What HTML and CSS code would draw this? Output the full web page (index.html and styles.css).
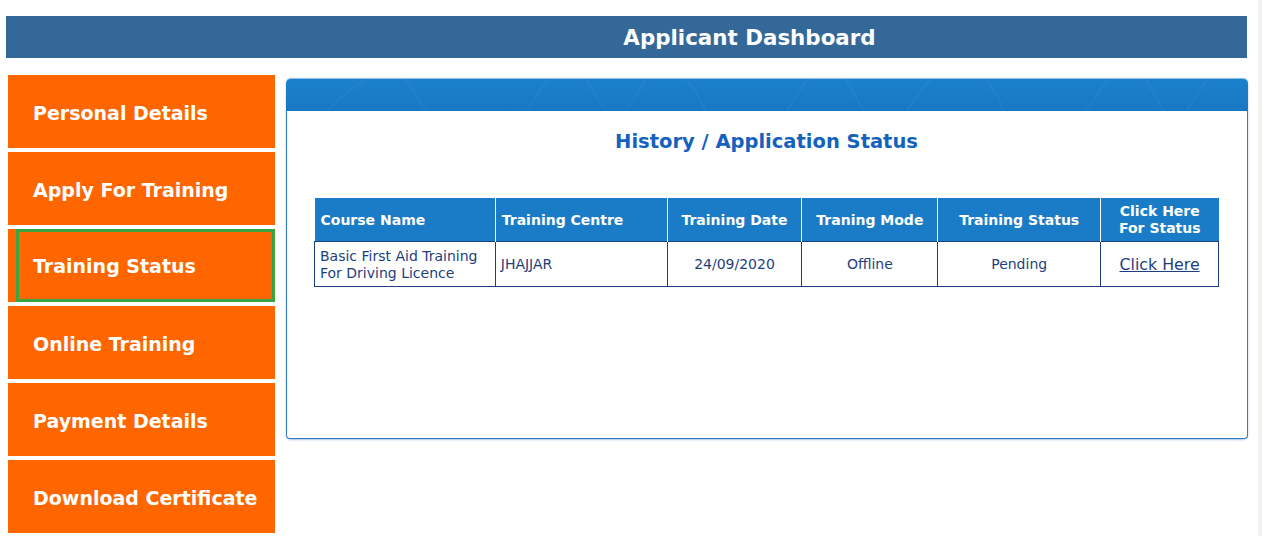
FILE: index.html
```html
<!DOCTYPE html>
<html>
<head>
<meta charset="utf-8">
<title>Applicant Dashboard</title>
<link rel="stylesheet" href="styles.css">
</head>
<body>
<div class="page">
  <div class="topbar">Applicant Dashboard</div>
  <div class="layout">
    <ul class="sidebar">
      <li><a href="#">Personal Details</a></li>
      <li><a href="#">Apply For Training</a></li>
      <li class="active"><a href="#">Training Status</a></li>
      <li><a href="#">Online Training</a></li>
      <li><a href="#">Payment Details</a></li>
      <li><a href="#">Download Certificate</a></li>
    </ul>
    <div class="panel">
      <div class="panel-head">
        <svg class="pattern" width="962" height="33" viewBox="0 0 962 33" preserveAspectRatio="none">
          <g fill="none" stroke="#ffffff" stroke-opacity="0.06" stroke-width="1.2">
            <polyline points="40,33 60,14 80,0"/>
            <polyline points="80,0 120,0 140,33"/>
            <polyline points="240,33 255,10 262,0 300,0 320,33"/>
            <polyline points="340,33 355,8 360,0"/>
            <polyline points="400,0 410,12 420,33"/>
            <polyline points="500,33 515,10 522,0 560,0 578,33"/>
            <polyline points="620,33 640,5 645,0"/>
            <polyline points="700,0 712,18 718,33"/>
            <polyline points="800,33 815,10 822,0 860,0 878,33"/>
            <polyline points="900,33 915,10 922,0"/>
          </g>
        </svg>
      </div>
      <div class="panel-body">
        <h2 class="title">History / Application Status</h2>
        <table class="grid">
          <thead>
            <tr>
              <th class="c1 left">Course Name</th>
              <th class="c2 left">Training Centre</th>
              <th class="c3">Training Date</th>
              <th class="c4">Traning Mode</th>
              <th class="c5">Training Status</th>
              <th class="c6">Click Here<br>For Status</th>
            </tr>
          </thead>
          <tbody>
            <tr>
              <td class="left">Basic First Aid Training<br>For Driving Licence</td>
              <td class="left">JHAJJAR</td>
              <td>24/09/2020</td>
              <td>Offline</td>
              <td>Pending</td>
              <td><a class="link" href="#">Click Here</a></td>
            </tr>
          </tbody>
        </table>
      </div>
    </div>
  </div>
</div>
</body>
</html>
```
FILE: styles.css
```css
* { box-sizing: border-box; }
html, body { margin: 0; padding: 0; background: #ffffff; }
body { font-family: "DejaVu Sans", Verdana, sans-serif; }

.page {
  width: 1262px;
  height: 536px;
  padding: 16px 11px 0 6px;
  border-right: 4px solid #f1f1f1;
  overflow: hidden;
}

.topbar {
  height: 42px;
  background: #346899;
  color: #ffffff;
  font-weight: bold;
  font-size: 21.4px;
  line-height: 44px;
  text-align: center;
  padding-left: 246px;
}

.layout {
  display: flex;
  align-items: flex-start;
  margin-top: 17px;
  padding-left: 2px;
}

.sidebar {
  list-style: none;
  margin: 0;
  padding: 0;
  width: 267px;
  flex-shrink: 0;
  display: flex;
  flex-direction: column;
  gap: 4px;
}
.sidebar li {
  height: 73px;
  background: #ff6600;
  display: flex;
}
.sidebar li a {
  flex: 1;
  display: flex;
  align-items: center;
  padding-left: 25px;
  padding-top: 3px;
  color: #ffffff;
  font-weight: bold;
  font-size: 19px;
  text-decoration: none;
}
.sidebar li.active a {
  margin-left: 8px;
  border: 3px solid #3aa445;
  padding-left: 14px;
  padding-top: 0;
}

.panel {
  flex-shrink: 0;
  margin-left: 11px;
  margin-top: 3px;
  width: 962px;
  height: 361px;
  display: flex;
  flex-direction: column;
  border-radius: 5px;
  box-shadow: 0 1px 2px rgba(60, 120, 190, 0.45);
}
.panel-head {
  height: 33px;
  background: linear-gradient(#1b80cc, #1878c2);
  border-radius: 5px 5px 0 0;
  border-top: 1px solid #8fbde3;
  overflow: hidden;
}
.pattern { display: block; }
.panel-body {
  flex: 1;
  border: 1px solid #2f7cc3;
  border-top: none;
  border-radius: 0 0 4px 4px;
  padding: 19px 28px 0 27px;
}
.title {
  margin: 0 0 44px 0;
  text-align: center;
  color: #1462be;
  font-size: 19.5px;
  font-weight: bold;
  line-height: 24px;
}

.grid {
  width: 905px;
  border-collapse: collapse;
  font-size: 14px;
}
.grid th {
  background: #1a7cc6;
  color: #ffffff;
  font-weight: bold;
  height: 43px;
  padding: 2px 6px 0 6px;
  text-align: center;
  border-right: 1px solid #ffffff;
  line-height: 17px;
}
.grid th:last-child { border-right: none; }
.grid td {
  height: 45px;
  border: 1px solid #1e3f7d;
  color: #1e3f7d;
  padding: 2px 5px 0 5px;
  text-align: center;
  line-height: 17px;
}
.grid .left { text-align: left; }
.c1 { width: 181px; }
.c2 { width: 172px; }
.c3 { width: 135px; }
.c4 { width: 136px; }
.c5 { width: 163px; }
.c6 { width: 118px; }
.link {
  color: #1e3f7d;
  font-size: 15.8px;
  text-decoration: underline;
}
```
